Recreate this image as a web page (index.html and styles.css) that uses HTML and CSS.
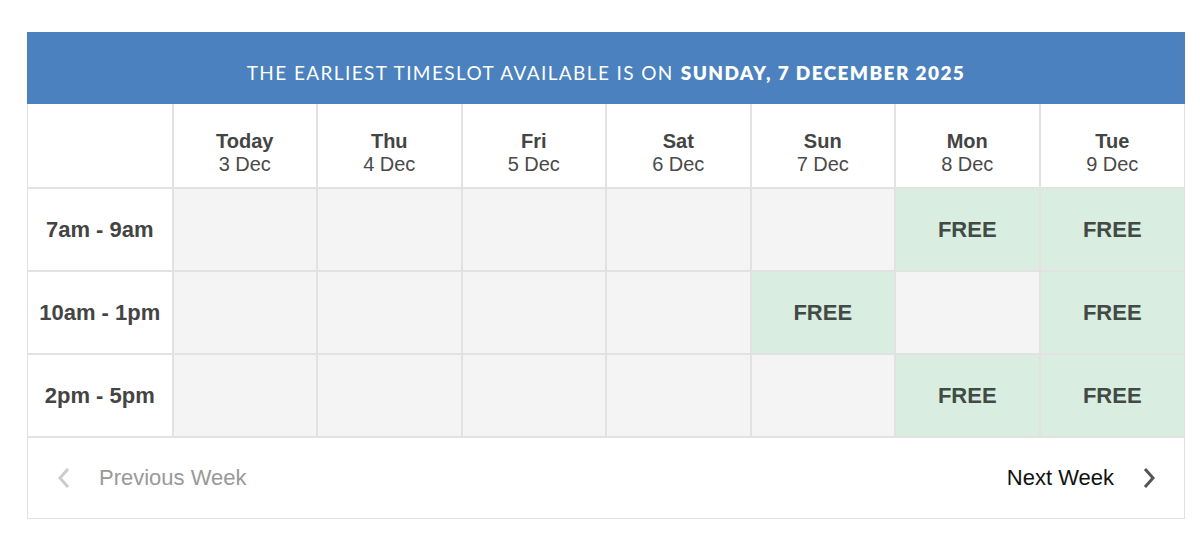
FILE: index.html
```html
<!DOCTYPE html>
<html>
<head>
<meta charset="utf-8">
<link rel="stylesheet" href="styles.css">
</head>
<body>
<div class="scheduler">
  <div class="banner">THE EARLIEST TIMESLOT AVAILABLE IS ON <b>SUNDAY, 7 DECEMBER 2025</b></div>
  <table class="grid">
    <thead>
      <tr>
        <th class="corner"></th>
        <th><span class="day">Today</span><span class="date">3 Dec</span></th>
        <th><span class="day">Thu</span><span class="date">4 Dec</span></th>
        <th><span class="day">Fri</span><span class="date">5 Dec</span></th>
        <th><span class="day">Sat</span><span class="date">6 Dec</span></th>
        <th><span class="day">Sun</span><span class="date">7 Dec</span></th>
        <th><span class="day">Mon</span><span class="date">8 Dec</span></th>
        <th><span class="day">Tue</span><span class="date">9 Dec</span></th>
      </tr>
    </thead>
    <tbody>
      <tr>
        <th class="slot">7am - 9am</th>
        <td></td><td></td><td></td><td></td><td></td>
        <td class="free">FREE</td><td class="free">FREE</td>
      </tr>
      <tr>
        <th class="slot">10am - 1pm</th>
        <td></td><td></td><td></td><td></td>
        <td class="free">FREE</td><td></td><td class="free">FREE</td>
      </tr>
      <tr>
        <th class="slot">2pm - 5pm</th>
        <td></td><td></td><td></td><td></td><td></td>
        <td class="free">FREE</td><td class="free">FREE</td>
      </tr>
    </tbody>
  </table>
  <div class="pager">
    <span class="nav prev">
      <svg width="14" height="22" viewBox="0 0 14 22"><path d="M11 2 L3 11 L11 20" fill="none" stroke="currentColor" stroke-width="3"/></svg>
      <span class="label">Previous Week</span>
    </span>
    <span class="nav next">
      <span class="label">Next Week</span>
      <svg width="14" height="22" viewBox="0 0 14 22"><path d="M3 2 L11 11 L3 20" fill="none" stroke="currentColor" stroke-width="3"/></svg>
    </span>
  </div>
</div>
</body>
</html>
```

FILE: styles.css
```css
html, body {
  margin: 0;
  padding: 0;
  background: #fff;
}
body {
  font-family: "Liberation Sans", Arial, sans-serif;
  padding: 32px 15px 0 27px;
}
.scheduler {
  width: 1158px;
  border: 1px solid #e2e2e2;
  border-top: none;
  box-sizing: border-box;
}
.banner {
  background: #4a81be;
  color: #fff;
  height: 72px;
  margin: 0 -1px;
  display: flex;
  align-items: center;
  justify-content: center;
  font-family: "Lato", "DejaVu Sans", sans-serif;
  font-size: 19px;
  letter-spacing: 1.4px;
  padding-top: 9px;
  box-sizing: border-box;
}
.banner b {
  font-weight: 800;
  margin-left: 7px;
}
.grid {
  width: 100%;
  border-collapse: collapse;
  table-layout: fixed;
}
.grid th, .grid td {
  border: 2px solid #e2e2e2;
  text-align: center;
  vertical-align: middle;
  padding: 0;
  height: 81px;
}
.grid tr > :first-child { border-left: none; }
.grid tr > :last-child { border-right: none; }
.grid thead th { border-top: none; }
.grid thead th {
  background: #fff;
  color: #444;
  font-size: 20px;
  line-height: 23px;
  padding-top: 14px;
  height: 69px;
}
.day { display: block; font-weight: bold; color: #444; }
.date { display: block; font-weight: normal; color: #4a4a4a; }
.grid td { background: #f4f4f4; }
.grid td.free {
  background: #d9ede1;
  color: #424a45;
  font-weight: bold;
  font-size: 22px;
}
.slot {
  background: #fff;
  color: #444;
  font-size: 22px;
  font-weight: bold;
}
.grid tbody tr:last-child > * { border-bottom: 2px solid #e2e2e2; }
.pager {
  height: 80px;
  display: flex;
  align-items: center;
  justify-content: space-between;
  padding: 0 28px 0 29px;
  font-size: 22px;
}
.nav {
  display: flex;
  align-items: center;
}
.prev { color: #999; }
.prev svg { color: #ccc; margin-right: 28px; }
.next { color: #111; }
.next svg { color: #555; margin-left: 28px; }
```
